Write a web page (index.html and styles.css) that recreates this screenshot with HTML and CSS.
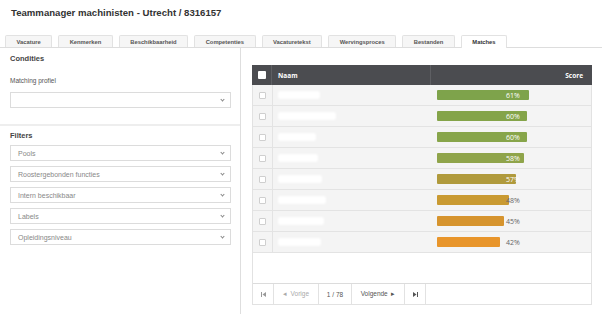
FILE: index.html
```html
<!DOCTYPE html>
<html lang="nl">
<head>
    <meta charset="UTF-8">
    <title>Teammanager machinisten - Matches</title>
    <link rel="stylesheet" href="styles.css">
</head>
<body>
    <h1 class="page-title">Teammanager machinisten - Utrecht / 8316157</h1>

    <nav class="tabs">
        <span class="tab">Vacature</span>
        <span class="tab">Kenmerken</span>
        <span class="tab">Beschikbaarheid</span>
        <span class="tab">Competenties</span>
        <span class="tab">Vacaturetekst</span>
        <span class="tab">Wervingsproces</span>
        <span class="tab">Bestanden</span>
        <span class="tab active">Matches</span>
    </nav>

    <main class="content">
        <aside class="sidebar">
            <section class="conditions">
                <h2>Condities</h2>
                <label>Matching profiel</label>
                <div class="select"><span></span><i class="caret"></i></div>
            </section>
            <section class="filters">
                <h2>Filters</h2>
                <div class="select"><span>Pools</span><i class="caret"></i></div>
                <div class="select"><span>Roostergebonden functies</span><i class="caret"></i></div>
                <div class="select"><span>Intern beschikbaar</span><i class="caret"></i></div>
                <div class="select"><span>Labels</span><i class="caret"></i></div>
                <div class="select"><span>Opleidingsniveau</span><i class="caret"></i></div>
            </section>
        </aside>

        <section class="results">
            <div class="grid">
                <div class="grid-head">
                    <div class="cell check"><span class="box head-box"></span></div>
                    <div class="cell">Naam</div>
                    <div class="cell score-title">Score</div>
                </div>
                <div class="grid-body">
                    <div class="row">
                        <div class="cell check"><span class="box"></span></div>
                        <div class="cell"><span class="blur" style="width: 42px"></span></div>
                        <div class="cell"><div class="bar" style="width: 92px; background: #7ea34b"></div><span class="pct light">61%</span></div>
                    </div>
                    <div class="row">
                        <div class="cell check"><span class="box"></span></div>
                        <div class="cell"><span class="blur" style="width: 58px"></span></div>
                        <div class="cell"><div class="bar" style="width: 90px; background: #84a449"></div><span class="pct light">60%</span></div>
                    </div>
                    <div class="row">
                        <div class="cell check"><span class="box"></span></div>
                        <div class="cell"><span class="blur" style="width: 38px"></span></div>
                        <div class="cell"><div class="bar" style="width: 90px; background: #87a54a"></div><span class="pct light">60%</span></div>
                    </div>
                    <div class="row">
                        <div class="cell check"><span class="box"></span></div>
                        <div class="cell"><span class="blur" style="width: 40px"></span></div>
                        <div class="cell"><div class="bar" style="width: 87px; background: #8fa44a"></div><span class="pct light">58%</span></div>
                    </div>
                    <div class="row">
                        <div class="cell check"><span class="box"></span></div>
                        <div class="cell"><span class="blur" style="width: 44px"></span></div>
                        <div class="cell"><div class="bar" style="width: 79px; background: #b09a3c"></div><span class="pct light">57%</span></div>
                    </div>
                    <div class="row">
                        <div class="cell check"><span class="box"></span></div>
                        <div class="cell"><span class="blur" style="width: 48px"></span></div>
                        <div class="cell"><div class="bar" style="width: 72px; background: #c99a32"></div><span class="pct">48%</span></div>
                    </div>
                    <div class="row">
                        <div class="cell check"><span class="box"></span></div>
                        <div class="cell"><span class="blur" style="width: 46px"></span></div>
                        <div class="cell"><div class="bar" style="width: 67px; background: #d6942e"></div><span class="pct">45%</span></div>
                    </div>
                    <div class="row">
                        <div class="cell check"><span class="box"></span></div>
                        <div class="cell"><span class="blur" style="width: 43px"></span></div>
                        <div class="cell"><div class="bar" style="width: 63px; background: #e8952b"></div><span class="pct">42%</span></div>
                    </div>
                </div>
                <div class="pager">
                    <span class="pg first">
                        <svg width="5" height="5" viewBox="0 0 5 5"><rect x="0" y="0" width="1" height="5" fill="#999"/><polygon points="5,0 5,5 1.5,2.5" fill="#999"/></svg>
                    </span>
                    <span class="pg prev">&#9666;&nbsp; Vorige</span>
                    <span class="pg page">1 / 78</span>
                    <span class="pg next">Volgende &nbsp;&#9656;</span>
                    <span class="pg last">
                        <svg width="5" height="5" viewBox="0 0 5 5"><polygon points="0,0 0,5 3.5,2.5" fill="#555"/><rect x="4" y="0" width="1" height="5" fill="#555"/></svg>
                    </span>
                    <span class="pg rest"></span>
                </div>
            </div>
        </section>
    </main>
</body>
</html>
```

FILE: styles.css
```css
* {
    box-sizing: border-box;
}
html, body {
    height: 100%;
}
body {
    margin: 0;
    font-family: "Liberation Sans", Arial, sans-serif;
    background-color: #fff;
    color: #333;
    display: flex;
    flex-direction: column;
}
.page-title {
    margin: 0;
    padding: 7px 11px 0;
    height: 35px;
    font-size: 9.6px;
    font-weight: bold;
    color: #333;
}
.tabs {
    display: flex;
    gap: 6px;
    padding-left: 5px;
    height: 13px;
    border-bottom: 1px solid #ddd;
}
.tab {
    height: 12px;
    padding: 0 10.5px;
    font-size: 5.8px;
    font-weight: bold;
    color: #555;
    line-height: 12px;
    background-color: #f6f6f6;
    border: 1px solid #e2e2e2;
    border-bottom: none;
    border-radius: 2px 2px 0 0;
}
.tab.active {
    background-color: #fff;
    height: 13px;
    color: #333;
}
.content {
    flex: 1;
    display: flex;
}
.sidebar {
    width: 241px;
    border-right: 1px solid #dedede;
}
.sidebar h2 {
    margin: 0;
    font-size: 7.5px;
    font-weight: bold;
    color: #444;
}
.conditions {
    padding: 6px 10px 11px 10px;
    border-bottom: 2px solid #eee;
}
.conditions label {
    display: block;
    margin: 14px 0 8px;
    font-size: 6.5px;
    color: #555;
}
.filters {
    padding: 5px 10px 0 10px;
}
.filters h2 {
    margin-bottom: 5px;
}
.select {
    display: flex;
    justify-content: space-between;
    align-items: center;
    width: 221px;
    height: 16px;
    margin-bottom: 5px;
    padding: 0 6px 0 7px;
    font-size: 7px;
    color: #888;
    border: 1px solid #dcdcdc;
    background-color: #fff;
}
.caret {
    width: 3px;
    height: 3px;
    border-right: 1px solid #888;
    border-bottom: 1px solid #888;
    transform: rotate(45deg);
    margin-top: -2px;
}
.results {
    flex: 1;
    padding: 17px 10px 9px 11px;
}
.grid {
    height: 100%;
    display: flex;
    flex-direction: column;
    border: 1px solid #e2e2e2;
    border-top: none;
    font-family: "Open Sans", "Liberation Sans", sans-serif;
}
.grid-head,
.row {
    display: grid;
    grid-template-columns: 20px 159px 1fr;
}
.grid-head {
    height: 20px;
    background-color: #4b4c50;
    color: #fff;
    font-size: 6.5px;
    font-weight: bold;
    margin: 0 -1px;
}
.grid-head .cell {
    display: flex;
    align-items: center;
    padding-left: 6px;
    border-right: 1px solid #5e5f63;
}
.grid-head .cell:last-child {
    border-right: none;
}
.grid-head .score-title {
    justify-content: flex-end;
    padding-right: 9px;
}
.grid-head .check {
    padding-left: 0;
    justify-content: center;
}
.grid-body {
    flex: 1;
}
.row {
    height: 21px;
    background-color: #f4f4f4;
    border-bottom: 1px solid #e3e3e3;
}
.row .cell {
    position: relative;
    display: flex;
    align-items: center;
    padding-left: 5px;
}
.row .check {
    padding-left: 0;
    justify-content: center;
    border-right: 1px solid #e3e3e3;
}
.box {
    width: 7px;
    height: 7px;
    background-color: #fff;
    border: 1px solid #cfcfcf;
    border-radius: 1px;
}
.head-box {
    width: 8px;
    height: 8px;
    border: none;
}
.blur {
    height: 8px;
    border-radius: 3px;
    background-color: #fff;
    filter: blur(1px);
}
.bar {
    height: 10px;
    border-radius: 1px;
}
.pct {
    position: absolute;
    left: 74px;
    font-size: 7px;
    color: #666;
}
.pct.light {
    color: #fff;
}
.pager {
    display: flex;
    height: 21px;
    border-top: 1px solid #dcdcdc;
    font-family: "Liberation Sans", Arial, sans-serif;
    font-size: 6.5px;
    color: #555;
}
.pg {
    display: flex;
    align-items: center;
    justify-content: center;
    border-right: 1px solid #e2e2e2;
}
.first, .last {
    width: 21px;
}
.prev {
    width: 45px;
    color: #aaa;
}
.page {
    width: 33px;
}
.next {
    width: 53px;
}
.rest {
    flex: 1;
    border-right: none;
}
```
